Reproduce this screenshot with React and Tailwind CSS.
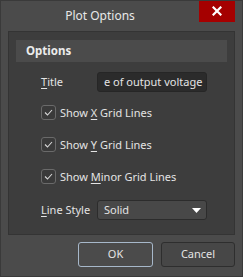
export default function App() {
  const font = { fontFamily: '"Noto Sans", "Open Sans", sans-serif' };
  const Check = ({ children }) => (
    <div className="flex items-center h-[15px] pl-[32px]">
      <div className="w-[15px] h-[15px] rounded-[3px] border border-[#6a6a6a] bg-[#3a3a3a] flex items-center justify-center">
        <svg width="9" height="7" viewBox="0 0 9 7">
          <path d="M1 3.5 L3.5 6 L8 1" fill="none" stroke="#d8d8d8" strokeWidth="1.1" />
        </svg>
      </div>
      <span className="ml-[4px] text-[11px] text-[#e4e4e4] leading-none">{children}</span>
    </div>
  );
  return (
    <div style={font} className="w-[243px] h-[277px] bg-[#4b4b4b] border border-[#3a3a3a] flex flex-col text-[#e4e4e4] overflow-hidden">
      <div className="flex h-[30px] shrink-0">
        <div className="flex-1 flex items-center justify-center text-[12px] text-[#e8e8e8] pb-[1px]">Plot Options</div>
        <div className="w-[36px] h-[22px] bg-[#a50000] mr-[7px] flex items-center justify-center -mt-[1px]">
          <svg width="10" height="10" viewBox="0 0 10 10">
            <path d="M1.5 1.5 L8.5 8.5 M8.5 1.5 L1.5 8.5" stroke="#ffffff" strokeWidth="2.2" strokeLinecap="square" />
          </svg>
        </div>
      </div>
      <div className="mx-[7px] h-[204px] border border-[#343434] bg-[#3d3d3d] flex flex-col">
        <div className="mx-[7px] mt-[8px] h-[22px] bg-[#4b4b4b] flex items-center pl-[10px] text-[11.5px] font-bold text-[#ececec]">Options</div>
        <div className="flex items-center mt-[10px] pl-[32px]">
          <span className="w-[56px] text-[11px]"><u className="underline-offset-2">T</u>itle</span>
          <div className="w-[110px] h-[20px] rounded-[3px] bg-[#2b2b2b] border border-[#262626] flex items-center pl-[6px] text-[11px] whitespace-nowrap overflow-hidden">e of output voltage</div>
        </div>
        <div className="mt-[13px]"><Check>Show <u className="underline-offset-2">X</u> Grid Lines</Check></div>
        <div className="mt-[17px]"><Check>Show <u className="underline-offset-2">Y</u> Grid Lines</Check></div>
        <div className="mt-[17px]"><Check>Show <u className="underline-offset-2">M</u>inor Grid Lines</Check></div>
        <div className="flex items-center mt-[16px] pl-[32px]">
          <span className="w-[56px] text-[11px]"><u className="underline-offset-2">L</u>ine Style</span>
          <div className="w-[110px] h-[20px] rounded-[3px] bg-[#484848] border border-[#2c2c2c] flex items-center pl-[6px] pr-[5px] text-[11px]">
            <span className="flex-1">Solid</span>
            <svg width="9" height="5" viewBox="0 0 9 5"><path d="M0 0 H9 L4.5 5 Z" fill="#ffffff" /></svg>
          </div>
        </div>
      </div>
      <div className="flex justify-end gap-[8px] mt-[7px] mr-[7px]">
        <div className="w-[75px] h-[25px] rounded-[3px] border border-[#a7b8ca] bg-[#4b4b4b] flex items-center justify-center text-[11px]">OK</div>
        <div className="w-[74px] h-[25px] rounded-[3px] border border-[#2e2e2e] bg-[#474747] flex items-center justify-center text-[11px]">Cancel</div>
      </div>
    </div>
  );
}
